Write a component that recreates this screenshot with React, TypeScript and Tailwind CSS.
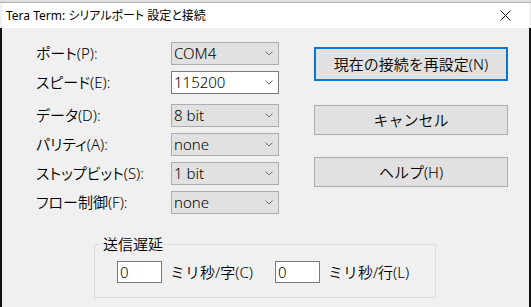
import { ReactNode } from 'react'

const FONT = "font-['Noto_Sans','Noto_Sans_CJK_JP',sans-serif]"

function Chevron() {
  return (
    <svg width="8" height="5" viewBox="0 0 8 5" className="shrink-0">
      <path d="M0.5 0.5 L4 4 L7.5 0.5" fill="none" stroke="#6d6d6d" strokeWidth="1" />
    </svg>
  )
}

function Combo({ value, editable }: { value: string; editable?: boolean }) {
  return (
    <div
      className={`w-[108px] h-[23px] flex items-center justify-between pl-[2px] pr-[5px] border ${
        editable ? 'bg-white border-[#7a7a7a]' : 'bg-[#e1e1e1] border-[#adadad]'
      }`}
    >
      <span className="leading-none">{value}</span>
      <Chevron />
    </div>
  )
}

function Row({ label, children, mt }: { label: string; children: ReactNode; mt: string }) {
  return (
    <div className={`flex items-center h-[23px] ${mt}`}>
      <span className="w-[135px] leading-none [font-feature-settings:'palt']">{label}</span>
      {children}
    </div>
  )
}

function Btn({ label, focused, h, mt }: { label: string; focused?: boolean; h: string; mt: string }) {
  return (
    <button
      className={`w-[194px] ${h} ${mt} flex items-center justify-center bg-[#e1e1e1] leading-none ${
        focused ? 'border-2 border-[#0078d7]' : 'border border-[#adadad]'
      }`}
    >
      {label}
    </button>
  )
}

export default function App() {
  return (
    <div className={`w-[531px] h-[307px] bg-[#f0f0f0] flex flex-col overflow-hidden text-black text-[15px] font-[350] ${FONT}`}>
      {/* window behind */}
      <div className="h-[3px] bg-[#dedede] border-b border-[#b4b4b4]" />

      {/* title bar */}
      <div className="h-[25px] mx-[2px] bg-white flex items-center pl-[4px] pr-[18px]">
        <span className="text-[12px] font-normal leading-none [font-feature-settings:'palt']">
          Tera Term: シリアルポート 設定と接続
        </span>
        <div className="flex-1" />
        <svg width="11" height="11" viewBox="0 0 11 11">
          <path d="M0.5 0.5 L10.5 10.5 M10.5 0.5 L0.5 10.5" stroke="#111" strokeWidth="1" />
        </svg>
      </div>

      {/* body */}
      <div className="flex flex-1">
        <div className="w-[2px] bg-[#111]" />
        <div className="flex-1 flex flex-col">
          <div className="flex pl-[34px]">
            {/* settings */}
            <div className="flex flex-col pt-[14px]">
              <Row label="ポート(P):" mt="">
                <Combo value="COM4" />
              </Row>
              <Row label="スピード(E):" mt="mt-[6px]">
                <Combo value="115200" editable />
              </Row>
              <Row label="データ(D):" mt="mt-[10px]">
                <Combo value="8 bit" />
              </Row>
              <Row label="パリティ(A):" mt="mt-[6px]">
                <Combo value="none" />
              </Row>
              <Row label="ストップビット(S):" mt="mt-[6px]">
                <Combo value="1 bit" />
              </Row>
              <Row label="フロー制御(F):" mt="mt-[6px]">
                <Combo value="none" />
              </Row>
            </div>

            {/* actions */}
            <div className="flex flex-col pt-[19px] ml-[35px]">
              <Btn label="現在の接続を再設定(N)" focused h="h-[34px]" mt="" />
              <Btn label="キャンセル" h="h-[30px]" mt="mt-[24px]" />
              <Btn label="ヘルプ(H)" h="h-[30px]" mt="mt-[22px]" />
            </div>
          </div>

          {/* send delay */}
          <fieldset className="ml-[92px] mt-[19px] w-[342px] border border-[#dcdcdc] pl-[22px] pb-[14px]">
            <legend className="ml-[-15px] px-[1px] leading-[22px]">送信遅延</legend>
            <div className="flex items-center mt-[6px]">
              <div className="w-[45px] h-[22px] bg-white border border-[#7a7a7a] flex items-center pl-[2px] leading-none">0</div>
              <span className="ml-[8px] leading-none">ミリ秒/字(C)</span>
              <div className="ml-[22px] w-[45px] h-[22px] bg-white border border-[#7a7a7a] flex items-center pl-[2px] leading-none">0</div>
              <span className="ml-[8px] leading-none">ミリ秒/行(L)</span>
            </div>
          </fieldset>
        </div>
        <div className="w-[2px] bg-[#111]" />
      </div>
    </div>
  )
}
